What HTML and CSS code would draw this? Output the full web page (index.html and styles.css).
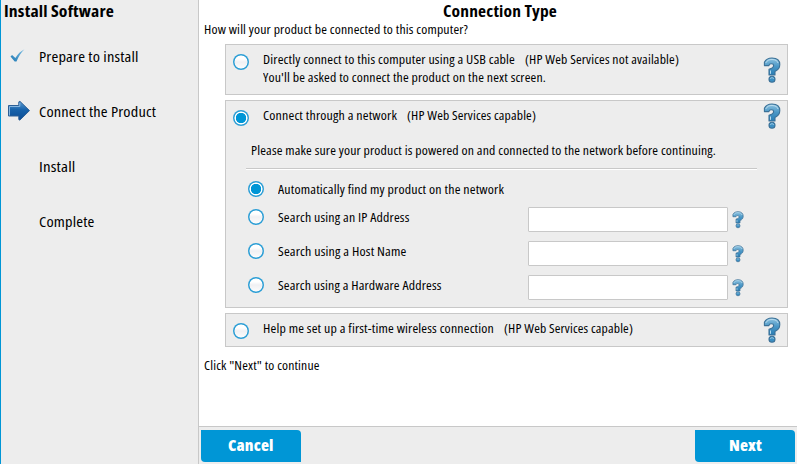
FILE: index.html
```
<!DOCTYPE html>
<html lang="en">
<head>
<meta charset="utf-8">
<title>Connection Type</title>
<link rel="stylesheet" href="styles.css">
</head>
<body>
<svg class="defs" width="0" height="0">
  <defs>
    <linearGradient id="blue" x1="0" y1="0" x2="0" y2="1"><stop offset="0" stop-color="#8fc3e0"/><stop offset=".5" stop-color="#4a97c6"/><stop offset="1" stop-color="#2a7db4"/></linearGradient>
    <linearGradient id="navy" x1="0" y1="0" x2="0" y2="1"><stop offset="0" stop-color="#5b9bd2"/><stop offset=".45" stop-color="#1762aa"/><stop offset="1" stop-color="#0b4c94"/></linearGradient>
    <linearGradient id="tick" x1="0" y1="1" x2="1" y2="0"><stop offset="0" stop-color="#1d78b4"/><stop offset="1" stop-color="#7fc0e4"/></linearGradient>
    <symbol id="help" viewBox="0 0 18 27">
      <path d="M1.400 8.600V5.200C2.800 2.300 5.400 1 9 1c4.900 0 7.800 2.600 7.800 6.600 0 3.600-1.800 5.600-4.800 6.800v3.600H6v-5.800c3.200-.9 4.600-1.700 4.600-3.500 0-1.300-.8-1.900-2.200-1.900-1.500 0-2.300.7-2.500 1.800z" fill="url(#blue)" stroke="#3c7197" stroke-width="1.100" stroke-linejoin="round"/>
      <path d="M2.800 5.900C4.100 3.400 6 2.500 9 2.500c3.300 0 5.400 1.300 6.100 3.500M7.500 13.500v3.300" fill="none" stroke="#b9dcee" stroke-width="1"/>
      <circle cx="9" cy="22.200" r="3" fill="#3c8fc3" stroke="#3c7197" stroke-width="1.100"/>
      <path d="M7.200 21.600q1.800-2 3.600 0" fill="none" stroke="#a8d0e6" stroke-width=".9"/>
    </symbol>
  </defs>
</svg>
<div class="window">
  <aside class="sidebar">
    <h1 class="heading"><span data-w="110">Install Software</span></h1>
    <ul class="steps">
      <li><svg class="step-icon" viewBox="0 0 24 22"><path d="M3.500 11.500l1.600-1.500 3.300 3.100C10.900 8.800 13.500 6.200 17.500 4.200c-3.300 3.300-5.700 6.700-8 12.300H7.700z" fill="url(#tick)"/></svg><span data-w="99.5">Prepare to install</span></li>
      <li><svg class="step-icon" viewBox="0 0 24 22"><path d="M1.500 5.500h10.300V2c0-.6.8-.8 1.300-.5l9.400 9.100-9.400 9.300c-.5.400-1.300.1-1.300-.5v-3.400H1.500z" fill="url(#navy)" stroke="#2c5f96" stroke-width="1"/><path d="M2.500 15.500V6.500h10.300V3" fill="none" stroke="#85b5df" stroke-width="1"/></svg><span data-w="117">Connect the Product</span></li>
      <li><span data-w="36.500">Install</span></li>
      <li><span data-w="55.500">Complete</span></li>
    </ul>
  </aside>
  <main class="main">
    <section class="content">
      <h2 class="heading center"><span data-w="114">Connection Type</span></h2>
      <p class="question"><span data-w="264">How will your product be connected to this computer?</span></p>
      <div class="card usb">
        <i class="radio"></i>
        <div class="label">
          <div class="line"><span data-w="252">Directly connect to this computer using a USB cable</span><span data-w="154">(HP Web Services not available)</span></div>
          <div class="line"><span data-w="283">You'll be asked to connect the product on the next screen.</span></div>
        </div>
        <svg class="help"><use href="#help"/></svg>
      </div>
      <div class="card network">
        <div class="top">
          <i class="radio on"></i>
          <div class="line"><span data-w="134">Connect through a network</span><span data-w="129">(HP Web Services capable)</span></div>
          <svg class="help"><use href="#help"/></svg>
        </div>
        <p class="note"><span data-w="465">Please make sure your product is powered on and connected to the network before continuing.</span></p>
        <div class="rule"></div>
        <div class="option auto"><i class="radio on"></i><span data-w="226">Automatically find my product on the network</span></div>
        <div class="option"><i class="radio"></i><span data-w="131.500">Search using an IP Address</span><input class="field" type="text"><svg class="help small"><use href="#help"/></svg></div>
        <div class="option"><i class="radio"></i><span data-w="128.500">Search using a Host Name</span><input class="field" type="text"><svg class="help small"><use href="#help"/></svg></div>
        <div class="option"><i class="radio"></i><span data-w="163.500">Search using a Hardware Address</span><input class="field" type="text"><svg class="help small"><use href="#help"/></svg></div>
      </div>
      <div class="card wireless">
        <i class="radio"></i>
        <div class="line"><span data-w="231">Help me set up a first-time wireless connection</span><span data-w="129">(HP Web Services capable)</span></div>
        <svg class="help"><use href="#help"/></svg>
      </div>
      <p class="hint"><span data-w="115.500">Click "Next" to continue</span></p>
    </section>
    <footer class="footer">
      <button class="button"><span data-w="45.500">Cancel</span></button>
      <button class="button"><span data-w="33">Next</span></button>
    </footer>
  </main>
</div>
<script src="labels.js"></script>
</body>
</html>
```
FILE: styles.css
```
* { box-sizing: border-box; }
body { margin: 0; background: #fff; color: #000; font: 13px/18px "Open Sans", "Liberation Sans", sans-serif; font-stretch: 75%; }
h1, h2, p, ul { margin: 0; padding: 0; }
.defs { position: absolute; }
span { display: inline-block; white-space: nowrap; letter-spacing: .15px; text-align: left; transform-origin: 0 50%; }
.window { display: flex; width: 797px; height: 464px; overflow: hidden; }
.sidebar { width: 199px; flex: none; background: #ededed; border-left: 1px solid #0096d6; border-right: 1px solid #c8c8c8; }
.heading { height: 22px; padding-left: 3px; font-size: 16px; line-height: 22px; font-weight: 700; }
.center { padding: 0 0 0 3px; text-align: center; }
.steps { list-style: none; padding-top: 7px; }
.steps li { display: flex; align-items: center; height: 55px; font-size: 14.500px; }
.steps li span { margin-left: 38px; }
.step-icon { width: 24px; height: 22px; margin: -2px 0 0 6px; }
.steps li .step-icon + span { margin-left: 8px; }
.main { flex: 1; display: flex; flex-direction: column; }
.content { height: 426px; }
.question { height: 22px; padding-left: 5px; line-height: 15px; }
.card { width: 563px; margin-left: 26px; border: 1px solid #c8c8c8; background: #ededed; display: flex; }
.usb { height: 51px; }
.radio { flex: none; width: 16px; height: 16px; border-radius: 50%; background: radial-gradient(circle, transparent 6.200px, #2d9fd6 6.800px), linear-gradient(#fff 0 30%, #f0f0f3 50%, #fff); }
.radio.on { background: radial-gradient(circle, #0096d6 4.900px, #fff 5.500px 6.200px, #2d9fd6 6.800px); }
.usb .radio { margin: 9px 0 0 7px; }
.label { margin: 5px 0 0 14px; }
.line { display: flex; gap: 10px; }
.help { flex: none; width: 18px; height: 27px; margin: 12px 6px 0 auto; }
.network { height: 208px; margin-top: 5px; flex-direction: column; }
.top { display: flex; height: 41px; }
.top .radio { margin: 9px 0 0 7px; }
.top .line, .wireless .line { margin: 5px 0 0 14px; }
.top .help { margin-top: 2px; }
.note { padding-left: 25px; height: 26px; margin-top: -1px; }
.rule { width: 511px; height: 2px; margin: 1px 0 5px 20px; border-top: 1px solid #c8c8c8; background: #fff; }
.option { display: flex; align-items: center; height: 34px; padding-left: 22px; }
.option.auto { height: 28px; margin-bottom: -3px; }
.option span { margin-left: 14px; }
.field { width: 200px; height: 25px; margin: 5px 0 0 auto; border: 1px solid #c8c8c8; border-radius: 1px; background: #fff; }
.help.small { width: 12px; height: 18px; margin: 5px 43px 0 4px; }
.wireless { height: 34px; margin-top: 5px; }
.wireless .radio { margin: 9px 0 0 7px; }
.wireless .help { margin-top: 3px; }
.hint { padding: 9px 0 0 5px; }
.footer { height: 38px; display: flex; justify-content: space-between; padding: 3px 2px; border-top: 1px solid #c8c8c8; background: #ededed; }
.button { width: 100px; height: 32px; padding: 0 0 2px; border: 0; border-radius: 0 4px 0 4px; background: #0096d6; color: #fff; font: inherit; font-size: 16px; font-weight: 800; line-height: 30px; }
```
FILE: labels.js
```
// Widen each label so that it fills its set width.
document.querySelectorAll('[data-w]').forEach(function (el) {
  var target = parseFloat(el.dataset.w);
  var scale = target / el.getBoundingClientRect().width;
  el.style.width = target + 'px';
  el.style.transform = 'scaleX(' + scale.toFixed(4) + ')';
});
```
